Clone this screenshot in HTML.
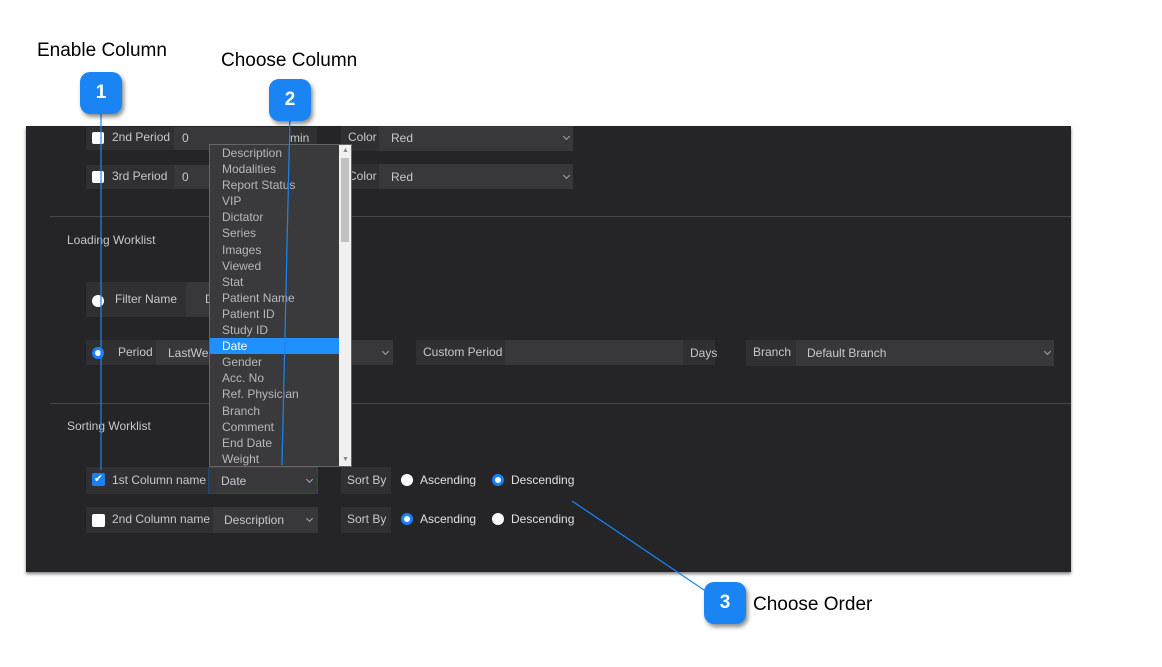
<!DOCTYPE html>
<html><head><style>
body{margin:0;width:1162px;height:667px;background:#fff;position:relative;overflow:hidden;font-family:"Liberation Sans",Arial,sans-serif}
.a{position:absolute}
#panel{left:26px;top:126px;width:1045px;height:446px;background:#252527;box-shadow:0 2px 3px rgba(0,0,0,.5)}
.t{position:absolute;font-family:"Liberation Sans",sans-serif;font-size:12px;color:#c8c8c8;white-space:nowrap}
.lbl{position:absolute;background:#303033}
.inp{position:absolute;background:#38383b}
.cb{position:absolute;width:12px;height:12px;background:#fff;border-radius:2px}
.rd{position:absolute;width:12px;height:12px;background:#fff;border-radius:50%}
.rs{position:absolute;width:12px;height:12px;background:#1a7fff;border-radius:50%}
.rs::after{content:"";position:absolute;left:3px;top:3px;width:6px;height:6px;border-radius:50%;background:#fff}
.chev{position:absolute;width:4px;height:4px;border-right:1.3px solid #aaa;border-bottom:1.3px solid #aaa;transform:rotate(45deg)}
.badge{position:absolute;width:42px;height:42px;border-radius:10px;background:#1a84f5;color:#fff;font-weight:bold;font-size:19px;text-align:center;line-height:42px;box-shadow:2px 3px 4px rgba(0,0,0,.45)}
.cap{position:absolute;font-size:19px;color:#000;white-space:nowrap}
.it{height:16.1px;line-height:16px;padding-left:12px;font-family:"Liberation Sans",sans-serif;font-size:12px;color:#b8b8b8;white-space:nowrap}
</style></head><body>
<div class="cap" style="left:37px;top:40px">Enable Column</div>
<div class="cap" style="left:221px;top:50px">Choose Column</div>
<div class="cap" style="left:753px;top:594px">Choose Order</div>

<div id="panel" class="a"></div>

<div class="lbl" style="left:86px;top:127px;width:88px;height:23px"></div>
<div class="inp" style="left:174px;top:127px;width:114px;height:23px"></div>
<div class="lbl" style="left:288px;top:127px;width:29px;height:23px"></div>
<div class="cb" style="left:92px;top:132px"></div>
<div class="t" style="left:112px;top:130px">2nd Period</div>
<div class="t" style="left:182px;top:131px">0</div>
<div class="t" style="left:290px;top:131px">min</div>
<div class="lbl" style="left:341px;top:126px;width:38px;height:25px"></div>
<div class="inp" style="left:379px;top:126px;width:194px;height:25px"></div>
<div class="t" style="left:348px;top:130px">Color</div>
<div class="t" style="left:391px;top:131px">Red</div>
<div class="chev" style="left:564px;top:134px"></div>

<div class="lbl" style="left:86px;top:165px;width:88px;height:24px"></div>
<div class="inp" style="left:174px;top:165px;width:114px;height:24px"></div>
<div class="cb" style="left:92px;top:171px"></div>
<div class="t" style="left:112px;top:169px">3rd Period</div>
<div class="t" style="left:182px;top:170px">0</div>
<div class="lbl" style="left:341px;top:164px;width:38px;height:25px"></div>
<div class="inp" style="left:379px;top:164px;width:194px;height:25px"></div>
<div class="t" style="left:348px;top:169px">Color</div>
<div class="t" style="left:391px;top:170px">Red</div>
<div class="chev" style="left:564px;top:173px"></div>

<div class="a" style="left:50px;top:216px;width:1021px;height:1px;background:#47474a"></div>
<div class="t" style="left:67px;top:233px">Loading Worklist</div>

<div class="lbl" style="left:86px;top:282px;width:100px;height:35px"></div>
<div class="inp" style="left:186px;top:282px;width:30px;height:35px"></div>
<div class="rd" style="left:92px;top:295px"></div>
<div class="t" style="left:115px;top:292px">Filter Name</div>
<div class="t" style="left:205px;top:292px">D</div>

<div class="lbl" style="left:86px;top:340px;width:70px;height:25px"></div>
<div class="inp" style="left:156px;top:340px;width:237px;height:25px"></div>
<div class="rs" style="left:92px;top:347px"></div>
<div class="t" style="left:118px;top:345px">Period</div>
<div class="t" style="left:168px;top:346px">LastWeek</div>
<div class="chev" style="left:383px;top:349px"></div>
<div class="lbl" style="left:416px;top:340px;width:89px;height:25px"></div>
<div class="inp" style="left:505px;top:340px;width:178px;height:25px"></div>
<div class="lbl" style="left:683px;top:340px;width:32px;height:25px"></div>
<div class="t" style="left:423px;top:345px">Custom Period</div>
<div class="t" style="left:690px;top:346px">Days</div>
<div class="lbl" style="left:746px;top:340px;width:50px;height:26px"></div>
<div class="inp" style="left:796px;top:340px;width:258px;height:26px"></div>
<div class="t" style="left:753px;top:345px">Branch</div>
<div class="t" style="left:807px;top:346px">Default Branch</div>
<div class="chev" style="left:1045px;top:349px"></div>

<div class="a" style="left:50px;top:403px;width:1021px;height:1px;background:#47474a"></div>
<div class="t" style="left:67px;top:419px">Sorting Worklist</div>

<div class="lbl" style="left:86px;top:467px;width:122px;height:27px"></div>
<div class="inp" style="left:208px;top:467px;width:110px;height:27px;box-shadow:inset 0 0 0 1px #1d4a7a"></div>
<div class="a" style="left:92px;top:473px;width:13px;height:13px;background:#1a7fff;border-radius:2px;color:#fff;font-size:11px;line-height:13px;text-align:center">✔</div>
<div class="t" style="left:112px;top:473px">1st Column name</div>
<div class="t" style="left:221px;top:474px">Date</div>
<div class="chev" style="left:307px;top:477px"></div>
<div class="lbl" style="left:341px;top:467px;width:50px;height:27px"></div>
<div class="t" style="left:347px;top:473px">Sort By</div>
<div class="rd" style="left:401px;top:474px"></div>
<div class="t" style="left:420px;top:473px;color:#e0e0e0">Ascending</div>
<div class="rs" style="left:492px;top:474px"></div>
<div class="t" style="left:511px;top:473px;color:#e0e0e0">Descending</div>

<div class="lbl" style="left:86px;top:507px;width:127px;height:26px"></div>
<div class="inp" style="left:213px;top:507px;width:105px;height:26px"></div>
<div class="cb" style="left:92px;top:514px;width:13px;height:13px"></div>
<div class="t" style="left:112px;top:512px">2nd Column name</div>
<div class="t" style="left:224px;top:513px">Description</div>
<div class="chev" style="left:307px;top:516px"></div>
<div class="lbl" style="left:341px;top:507px;width:50px;height:26px"></div>
<div class="t" style="left:347px;top:512px">Sort By</div>
<div class="rs" style="left:401px;top:513px"></div>
<div class="t" style="left:420px;top:512px;color:#e0e0e0">Ascending</div>
<div class="rd" style="left:492px;top:513px"></div>
<div class="t" style="left:511px;top:512px;color:#e0e0e0">Descending</div>

<div class="a" style="left:209px;top:144px;width:143px;height:323px;background:#3a3a3d;border:1px solid #666;box-sizing:border-box;padding-top:0px">
<div class="it">Description</div><div class="it">Modalities</div><div class="it">Report Status</div><div class="it">VIP</div><div class="it">Dictator</div><div class="it">Series</div><div class="it">Images</div><div class="it">Viewed</div><div class="it">Stat</div><div class="it">Patient Name</div><div class="it">Patient ID</div><div class="it">Study ID</div><div class="it" style="background:#1e90ff;color:#fff;margin-right:12px">Date</div><div class="it">Gender</div><div class="it">Acc. No</div><div class="it">Ref. Physician</div><div class="it">Branch</div><div class="it">Comment</div><div class="it">End Date</div><div class="it">Weight</div>
<div class="a" style="left:129px;top:0;width:12px;height:321px;background:#f0f0f0"></div>
<div class="a" style="left:131px;top:13px;width:8px;height:84px;background:#c1c1c1"></div>
<div class="a" style="left:132px;top:2px;font-size:7px;color:#888">▲</div>
<div class="a" style="left:132px;top:311px;font-size:7px;color:#888">▼</div>
</div>

<svg class="a" style="left:0;top:0" width="1162" height="667">
<line x1="101" y1="110" x2="101" y2="470" stroke="#1a84f5" stroke-width="1.2"/>
<line x1="290" y1="115" x2="282" y2="465" stroke="#1a84f5" stroke-width="1.2"/>
<line x1="707" y1="592" x2="572" y2="501" stroke="#1a84f5" stroke-width="1.2"/>
</svg>
<div class="badge" style="left:80px;top:72px">1</div>
<div class="badge" style="left:269px;top:79px">2</div>
<div class="badge" style="left:704px;top:582px">3</div>
</body></html>
